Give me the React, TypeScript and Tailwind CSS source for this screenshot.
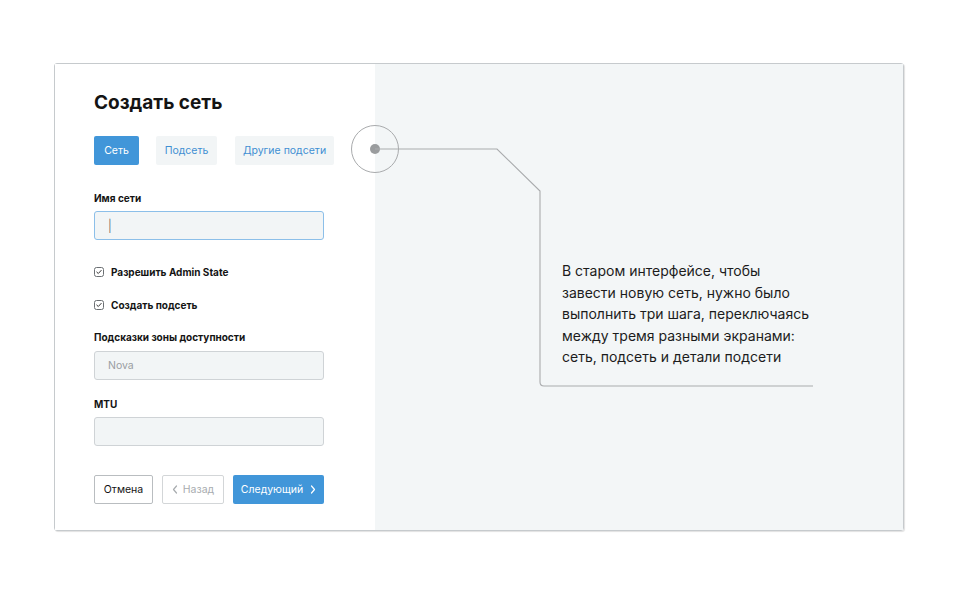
import React from "react";

const font = { fontFamily: "Inter, 'Noto Sans', sans-serif" };

const CheckBox: React.FC = () => (
  <svg width="10" height="10" viewBox="0 0 10 10" className="shrink-0">
    <rect x="0.5" y="0.5" width="9" height="9" rx="2" fill="white" stroke="#6b6f73" strokeWidth="1" />
    <path d="M2.8 5.1 L4.3 6.5 L7.2 3.4" fill="none" stroke="#333" strokeWidth="1" strokeLinecap="round" strokeLinejoin="round" />
  </svg>
);

const Chevron: React.FC<{ dir: "left" | "right"; color: string }> = ({ dir, color }) => (
  <svg width="6" height="9" viewBox="0 0 6 9">
    <path
      d={dir === "left" ? "M4.5 1 L1.5 4.5 L4.5 8" : "M1.5 1 L4.5 4.5 L1.5 8"}
      fill="none"
      stroke={color}
      strokeWidth="1.2"
      strokeLinecap="round"
      strokeLinejoin="round"
    />
  </svg>
);

export default function App() {
  return (
    <div className="min-h-[594px] w-[960px] bg-white pl-[54px] pt-[63px]" style={font}>
      <div className="relative flex h-[468px] w-[850px] rounded-[3px] border border-[#c6cacd] shadow-[1px_1px_1px_rgba(0,0,0,0.12)]">
        {/* left form */}
        <div className="flex w-[320px] flex-col bg-white px-[39px] pt-[27px]">
          <h1 className="text-[19px] font-bold leading-[24px] text-[#141414]">Создать сеть</h1>

          <div className="mt-[21px] flex">
            <button className="h-[29px] w-[45px] whitespace-nowrap rounded-[2px] bg-[#4196d9] text-[10.5px] text-white">Сеть</button>
            <button className="ml-[17px] h-[29px] w-[61px] whitespace-nowrap rounded-[2px] bg-[#f2f5f6] text-[10.5px] text-[#3f8fd3]">Подсеть</button>
            <button className="ml-[18px] h-[29px] w-[99px] whitespace-nowrap rounded-[2px] bg-[#f2f5f6] text-[10.5px] text-[#3f8fd3]">Другие подсети</button>
          </div>

          <label className="mt-[26px] text-[10px] font-bold leading-[14px] text-[#141414]">Имя сети</label>
          <div className="mt-[6px] flex h-[29px] w-[230px] items-center rounded-[3px] border border-[#8cbfe9] bg-[#f2f5f6] px-[13px]">
            <span className="text-[12px] font-light text-[#555]">|</span>
          </div>

          <div className="mt-[25px] flex h-[14px] items-center gap-[7px]">
            <CheckBox />
            <span className="text-[10px] font-bold text-[#141414]">Разрешить Admin State</span>
          </div>
          <div className="mt-[19px] flex h-[14px] items-center gap-[7px]">
            <CheckBox />
            <span className="text-[10px] font-bold text-[#141414]">Создать подсеть</span>
          </div>

          <label className="mt-[18px] text-[10px] font-bold leading-[14px] text-[#141414]">Подсказки зоны доступности</label>
          <div className="mt-[7px] flex h-[29px] w-[230px] items-center rounded-[3px] border border-[#cfd3d6] bg-[#f2f5f6] px-[13px]">
            <span className="text-[10.5px] text-[#9a9ea2]">Nova</span>
          </div>

          <label className="mt-[17px] text-[10px] font-bold leading-[14px] text-[#141414]">MTU</label>
          <div className="mt-[6px] h-[29px] w-[230px] rounded-[3px] border border-[#cfd3d6] bg-[#f2f5f6]" />

          <div className="mt-[29px] flex gap-[9px]">
            <button className="h-[29px] w-[59px] rounded-[2px] border border-[#b9bdc0] bg-white text-[10.5px] text-[#141414]">Отмена</button>
            <button className="flex h-[29px] w-[62px] items-center justify-center gap-[5px] rounded-[2px] border border-[#d3d6d8] bg-white text-[10.5px] text-[#a8acaf]">
              <Chevron dir="left" color="#a8acaf" />
              Назад
            </button>
            <button className="flex h-[29px] w-[91px] items-center justify-center gap-[7px] rounded-[2px] bg-[#4196d9] text-[10.5px] text-white">
              Следующий
              <Chevron dir="right" color="#ffffff" />
            </button>
          </div>
        </div>

        {/* right annotation area */}
        <div className="flex-1 bg-[#f3f6f7] pl-[187px] pt-[196px]">
          <p className="whitespace-nowrap text-[14px] leading-[21.5px] text-[#1c1c1c]">
            В старом интерфейсе, чтобы
            <br />
            завести новую сеть, нужно было
            <br />
            выполнить три шага, переключаясь
            <br />
            между тремя разными экранами:
            <br />
            сеть, подсеть и детали подсети
          </p>
        </div>

        {/* callout lines */}
        <svg className="pointer-events-none absolute left-0 top-0" width="850" height="468" viewBox="0 0 850 468">
          <circle cx="320" cy="85" r="23.5" fill="none" stroke="#a9abad" strokeWidth="1" />
          <circle cx="320" cy="85" r="5" fill="#9a9c9e" />
          <path
            d="M320 85 H442 L485 127 V318 Q485 322 489 322 H758"
            fill="none"
            stroke="#a9abad"
            strokeWidth="1.1"
          />
        </svg>
      </div>
    </div>
  );
}
